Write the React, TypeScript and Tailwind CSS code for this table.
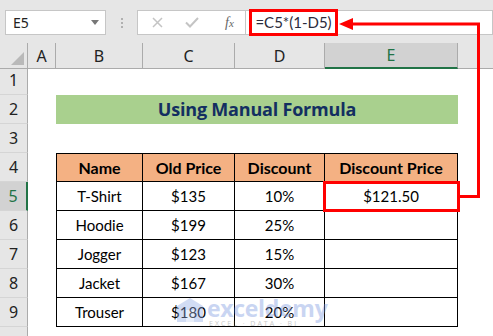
import React from "react";

const GRID = "grid grid-cols-[28px_28px_87px_92px_90px_133px_1fr]";
const cellFont = { fontFamily: "Lato, 'Open Sans', sans-serif" } as React.CSSProperties;
const hdrFont = { fontFamily: "'Noto Sans', 'Open Sans', sans-serif" } as React.CSSProperties;

const data = [
  ["T-Shirt", "$135", "10%", "$121.50"],
  ["Hoodie", "$199", "25%", ""],
  ["Jogger", "$123", "15%", ""],
  ["Jacket", "$167", "30%", ""],
  ["Trouser", "$180", "20%", ""],
];

function RowHeader({ n, selected }: { n?: number; selected?: boolean }) {
  return (
    <div
      style={hdrFont}
      className={
        "flex items-end justify-center pb-[2px] text-[16px] border-b border-[#d5d5d5] " +
        (selected
          ? "bg-[#d2d2d2] text-[#217346] border-r-2 border-r-[#217346]"
          : "bg-[#e6e6e6] text-[#222] border-r border-r-[#ababab]")
      }
    >
      {n}
    </div>
  );
}

export default function App() {
  return (
    <div className="relative w-[493px] h-[336px] overflow-hidden bg-white">
      {/* Formula bar area */}
      <div className="h-[43px] bg-[#e6e6e6] flex items-start pt-[10px]">
        <div className="ml-[5px] w-[101px] h-[25px] bg-white border border-[#c6c6c6] flex items-center justify-between pl-[7px] pr-[6px]">
          <span style={hdrFont} className="text-[14px] text-[#222]">E5</span>
          <svg width="8" height="5" viewBox="0 0 8 5"><polygon points="0,0 8,0 4,5" fill="#777" /></svg>
        </div>
        <div className="w-[31px] h-[25px] flex flex-col items-center justify-center gap-[2px]">
          <div className="w-[2px] h-[2px] bg-[#b0b0b0]" />
          <div className="w-[2px] h-[2px] bg-[#b0b0b0]" />
          <div className="w-[2px] h-[2px] bg-[#b0b0b0]" />
        </div>
        <div className="w-[109px] h-[25px] bg-white border border-[#c6c6c6] flex items-center">
          <svg className="ml-[14px]" width="11" height="11" viewBox="0 0 11 11">
            <path d="M1 1 L10 10 M10 1 L1 10" stroke="#c4c4c4" strokeWidth="1.5" />
          </svg>
          <svg className="ml-[22px]" width="14" height="11" viewBox="0 0 14 11">
            <path d="M1 5.5 L5 9.5 L13 1" stroke="#c4c4c4" strokeWidth="2" fill="none" />
          </svg>
          <span className="ml-[26px] text-[14px] italic text-[#666]" style={{ fontFamily: "'Liberation Serif', serif" }}>
            f<span className="text-[11px]">x</span>
          </span>
        </div>
        <div className="flex-1 h-[25px] bg-white border-y border-r border-[#c6c6c6] flex items-start">
          <div className="ml-[3px] -mt-[2px] h-[27px] w-[89px] border-[3px] border-[#ff0000] flex items-center justify-center">
            <span style={cellFont} className="text-[15px] text-[#2b2b3b]">=C5*(1-D5)</span>
          </div>
        </div>
      </div>

      {/* Column headers */}
      <div className={GRID + " h-[23px]"} style={hdrFont}>
        <div className="relative bg-[#e6e6e6] border-r border-b border-[#ababab]">
          <svg className="absolute right-[3px] bottom-[3px]" width="13" height="13" viewBox="0 0 13 13">
            <polygon points="13,0 13,13 0,13" fill="#b9b9b9" />
          </svg>
        </div>
        {["A", "B", "C", "D"].map((c) => (
          <div key={c} className="bg-[#e6e6e6] border-r border-b border-[#ababab] flex items-center justify-center text-[16px] text-[#222]">
            {c}
          </div>
        ))}
        <div className="bg-[#d2d2d2] border-r border-[#ababab] border-b-2 border-b-[#217346] flex items-center justify-center text-[16px] text-[#217346]">
          E
        </div>
        <div className="bg-[#e6e6e6] border-b border-[#ababab]" />
      </div>

      {/* Row 1 */}
      <div className={GRID + " h-[29px]"}>
        <RowHeader n={1} />
        <div /><div /><div /><div /><div /><div />
      </div>
      {/* Row 2 */}
      <div className={GRID + " h-[29px]"}>
        <RowHeader n={2} />
        <div />
        <div className="col-span-4 bg-[#a9d08e] flex items-center justify-center">
          <span style={{ fontFamily: "'Open Sans', sans-serif" }} className="text-[18px] font-bold text-[#132f61] tracking-[-0.2px]">
            Using Manual Formula
          </span>
        </div>
        <div />
      </div>
      {/* Row 3 */}
      <div className={GRID + " h-[29px]"}>
        <RowHeader n={3} />
        <div /><div /><div /><div /><div /><div />
      </div>
      {/* Row 4 header */}
      <div className={GRID + " h-[29px]"} style={cellFont}>
        <RowHeader n={4} />
        <div />
        {["Name", "Old Price", "Discount", "Discount Price"].map((h, i) => (
          <div
            key={h}
            className={
              "bg-[#f4b183] border-t border-b border-r border-black flex items-center justify-center text-[16px] font-bold text-black " +
              (i === 0 ? "border-l" : "")
            }
          >
            {h}
          </div>
        ))}
        <div />
      </div>
      {data.map((r, ri) => (
        <div key={ri} className={GRID + " h-[29px]"} style={cellFont}>
          <RowHeader n={5 + ri} selected={ri === 0} />
          <div />
          {r.map((v, i) => (
            <div
              key={i}
              className={
                "border-b border-r border-black flex items-center justify-center text-[15px] text-black " +
                (i === 0 ? "border-l" : "")
              }
            >
              {v}
            </div>
          ))}
          <div />
        </div>
      ))}
      <div className={GRID + " h-[29px]"}>
        <RowHeader />
        <div /><div /><div /><div /><div /><div />
      </div>

      {/* Selected cell red box */}
      <div className="absolute left-[323px] top-[181px] w-[137px] h-[31px] border-[3px] border-[#ff0000]" />

      {/* Arrow */}
      <svg className="absolute left-0 top-0 pointer-events-none" width="493" height="336" viewBox="0 0 493 336">
        <path d="M459 196.5 L478.5 196.5 L478.5 24 L350 24" stroke="#ff0000" strokeWidth="3" fill="none" />
        <polygon points="339,24 353,18 353,30" fill="#ff0000" />
      </svg>

      {/* Watermark */}
      <div className="absolute left-[176px] top-[297px] flex items-start gap-[3px] opacity-40 pointer-events-none">
        <svg width="28" height="26" viewBox="0 0 28 26">
          <polygon points="14,1 27,9 27,25 1,25 1,9" fill="#8fa9e6" />
          <rect x="10" y="13" width="8" height="12" fill="#c8d6f5" />
        </svg>
        <div className="flex flex-col items-start leading-none">
          <span style={{ fontFamily: "'Open Sans', sans-serif" }} className="text-[23px] font-bold text-[#7a98e0] leading-[22px] tracking-[-0.3px]">
            exceldemy
          </span>
          <span style={{ fontFamily: "'Open Sans', sans-serif" }} className="text-[7px] text-[#777] tracking-[2px] ml-[2px] mt-[1px]">
            EXCEL · DATA · BI
          </span>
        </div>
      </div>
    </div>
  );
}
